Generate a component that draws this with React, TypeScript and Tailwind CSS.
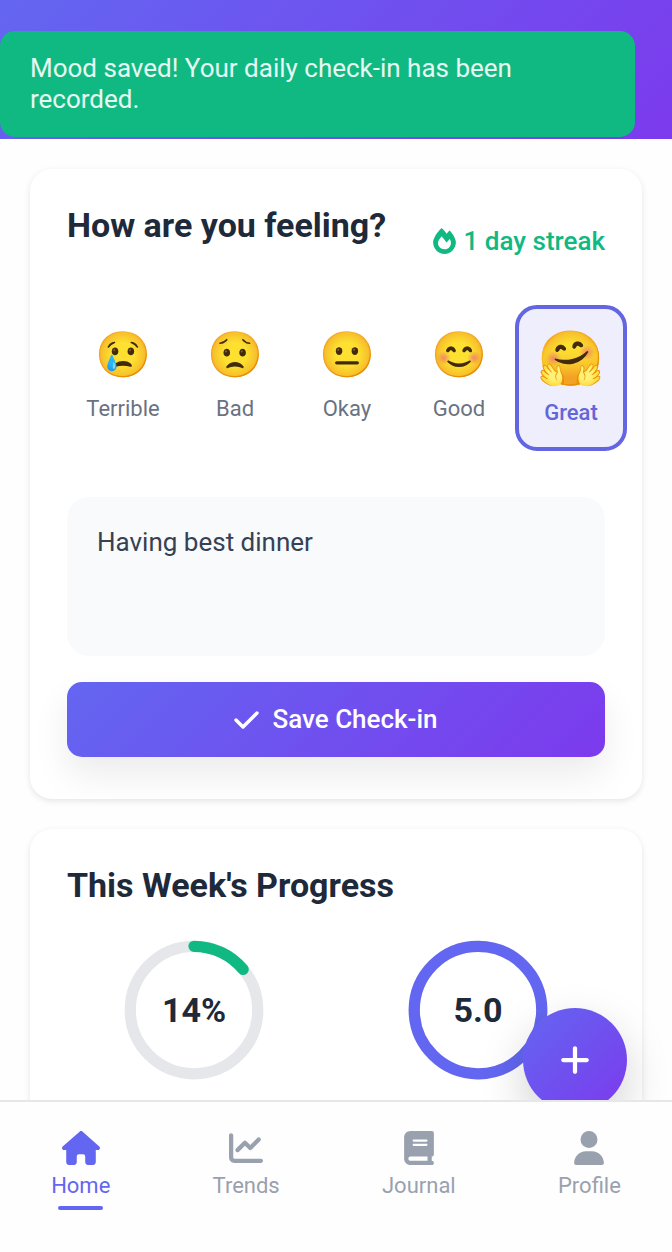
import { useState } from 'react';
import { FaFireAlt } from 'react-icons/fa';
import { FaBook, FaChartLine, FaCheck, FaHouse, FaPlus, FaUser } from 'react-icons/fa6';

const moods = [
  { emoji: '😢', label: 'Terrible' },
  { emoji: '😟', label: 'Bad' },
  { emoji: '😐', label: 'Okay' },
  { emoji: '😊', label: 'Good' },
  { emoji: '🤗', label: 'Great' },
];

const tabs = [
  { Icon: FaHouse, label: 'Home' },
  { Icon: FaChartLine, label: 'Trends' },
  { Icon: FaBook, label: 'Journal' },
  { Icon: FaUser, label: 'Profile' },
];

const RADIUS = 34;
const CIRCUMFERENCE = 2 * Math.PI * RADIUS;

function Ring({ value, text, color }: { value: number; text: string; color: string }) {
  return (
    <div className="relative mx-auto size-[150px]">
      <svg viewBox="0 0 80 80" className="size-full -rotate-90" fill="none" strokeWidth="6">
        <circle cx="40" cy="40" r={RADIUS} stroke="#e5e7eb" />
        <circle
          cx="40"
          cy="40"
          r={RADIUS}
          stroke={color}
          strokeLinecap="round"
          strokeDasharray={`${CIRCUMFERENCE * value} ${CIRCUMFERENCE}`}
        />
      </svg>
      <span className="absolute inset-0 flex items-center justify-center text-[34px] font-bold text-gray-800">
        {text}
      </span>
    </div>
  );
}

export default function App() {
  const [mood, setMood] = useState('Great');
  const [note, setNote] = useState('Having best dinner');

  return (
    <div className="relative flex h-screen flex-col overflow-hidden bg-[#fefefe] font-[Roboto,'Noto_Color_Emoji',sans-serif] text-gray-800">
      <header className="h-[139px] shrink-0 bg-[linear-gradient(135deg,#6366f1,#7c3aed)]" />
      <div
        role="status"
        className="absolute top-[31px] right-[37px] left-0 z-20 rounded-[15px] bg-[#10b981] px-[30px] py-[22px] text-[26px] leading-[31px] text-white/90"
      >
        Mood saved! Your daily check-in has been recorded.
      </div>

      <main className="flex min-h-0 flex-1 flex-col gap-[30px] overflow-hidden p-[30px]">
        <section className="shrink-0 rounded-[22px] bg-white px-[37px] pt-[37px] pb-[42px] shadow-[0_2px_6px_rgba(0,0,0,0.1)]">
          <div className="mb-[30px] flex items-center justify-between">
            <h2 className="mb-[31px] text-[34px] leading-[38px] font-bold">How are you feeling?</h2>
            <div className="flex items-center gap-2 text-[26px] leading-[30px] font-medium text-[#10b981]">
              <FaFireAlt className="h-[26px] w-[23px]" />
              <span>1 day streak</span>
            </div>
          </div>

          <div className="-mr-[22px] grid grid-cols-5">
            {moods.map(({ emoji, label }) => {
              const selected = mood === label;
              return (
                <button
                  key={label}
                  type="button"
                  aria-pressed={selected}
                  onClick={() => setMood(label)}
                  className={
                    selected
                      ? 'flex h-[146px] flex-col items-center rounded-[22px] border-4 border-[#6366e0] bg-[#efeefd] pt-[20px] font-medium text-[#6366d8]'
                      : 'flex h-[146px] flex-col items-center rounded-[22px] border-4 border-transparent pt-[20px] text-gray-500'
                  }
                >
                  <span className={selected ? 'text-[54px] leading-[60px]' : 'text-[45px] leading-[52px]'}>
                    {emoji}
                  </span>
                  <span
                    className={
                      selected ? 'mt-[11px] text-[22px] leading-[26px]' : 'mt-[15px] text-[22px] leading-[26px]'
                    }
                  >
                    {label}
                  </span>
                </button>
              );
            })}
          </div>

          <textarea
            aria-label="Mood note"
            value={note}
            onChange={(event) => setNote(event.target.value)}
            className="mt-[46px] block h-[159px] w-full resize-none rounded-[22px] bg-[#f9fafc] p-[30px] text-[26px] leading-[30px] text-gray-700 outline-none"
          />
          <button
            type="button"
            className="mt-[26px] flex h-[75px] w-full items-center justify-center gap-[13px] rounded-[15px] bg-[linear-gradient(135deg,#6366f1,#7c3aed)] text-[26px] font-medium text-white shadow-[0_18px_36px_rgba(0,0,0,0.08)]"
          >
            <FaCheck className="h-[28px] w-[25px]" />
            Save Check-in
          </button>
        </section>

        <section className="shrink-0 rounded-[22px] bg-white p-[37px] shadow-[0_2px_6px_rgba(0,0,0,0.1)]">
          <h2 className="mb-[31px] text-[34px] leading-[38px] font-bold">This Week's Progress</h2>
          <div className="grid grid-cols-2 gap-[30px]">
            <Ring value={0.14} text="14%" color="#10b981" />
            <Ring value={1} text="5.0" color="#6366f1" />
          </div>
        </section>
      </main>

      <button
        type="button"
        aria-label="Add entry"
        className="absolute right-[45px] bottom-[140px] flex size-[104px] items-center justify-center rounded-full bg-[linear-gradient(135deg,#6366f1,#7c3aed)] text-white shadow-[0_18px_46px_rgba(0,0,0,0.18)]"
      >
        <FaPlus className="size-[34px]" />
      </button>

      <nav className="relative z-10 flex h-[152px] shrink-0 items-start justify-around border-t-2 border-gray-200 bg-[#fefefe] pt-[29px]">
        {tabs.map(({ Icon, label }) => {
          const active = label === 'Home';
          return (
            <a
              key={label}
              href={`#${label.toLowerCase()}`}
              aria-current={active ? 'page' : undefined}
              className={
                active
                  ? 'flex flex-col items-center text-[22px] leading-[26px] text-[#6366f1]'
                  : 'flex flex-col items-center text-[22px] leading-[26px] text-gray-400'
              }
            >
              <Icon className="mb-[8px] h-[34px] w-[38px]" />
              {label}
              {active && <span className="mt-[7px] h-1 w-[45px] rounded-full bg-[#6366f1]" />}
            </a>
          );
        })}
      </nav>
    </div>
  );
}
